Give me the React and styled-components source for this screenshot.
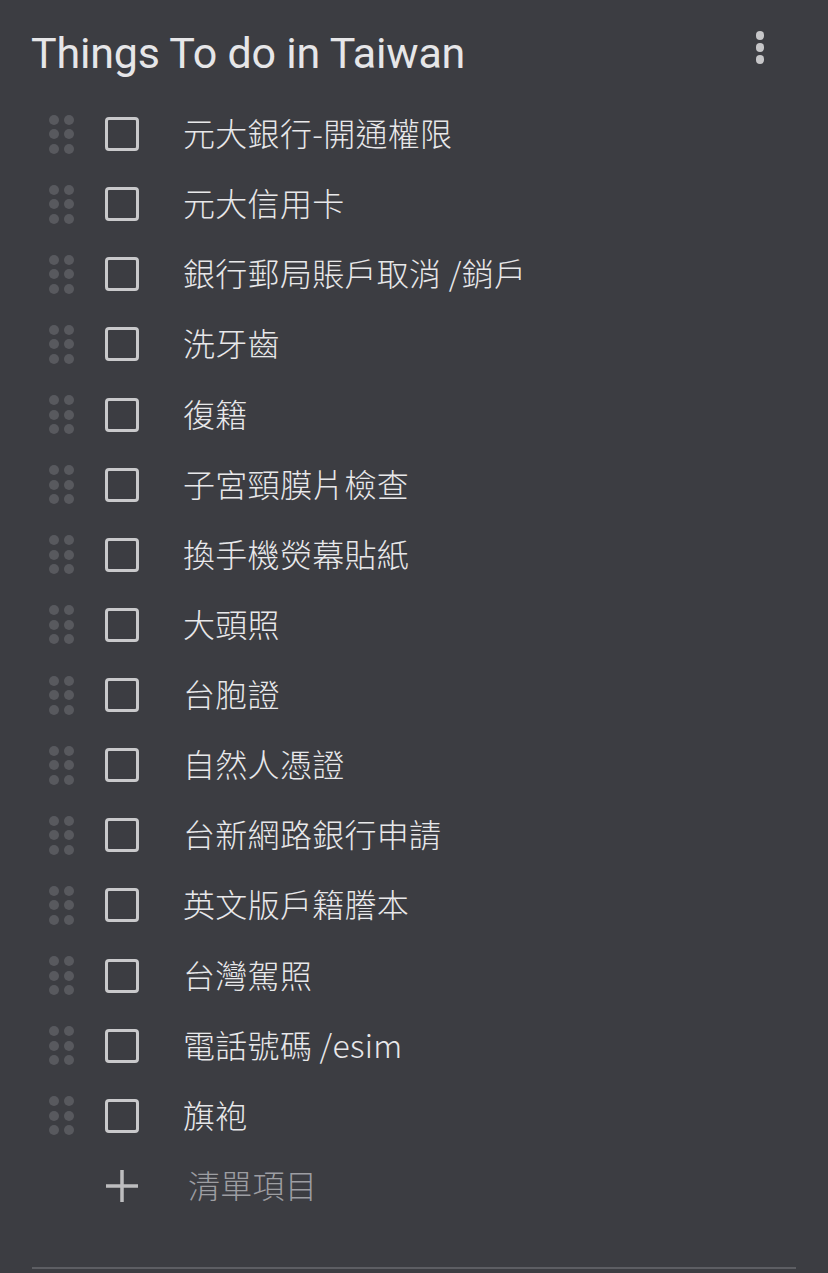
import styled, { createGlobalStyle } from 'styled-components';

const GlobalStyle = createGlobalStyle`
  html, body {
    margin: 0;
    padding: 0;
    background: #3c3d42;
  }
`;

const items = [
  '元大銀行-開通權限',
  '元大信用卡',
  '銀行郵局賬戶取消 /銷戶',
  '洗牙齒',
  '復籍',
  '子宮頸膜片檢查',
  '換手機熒幕貼紙',
  '大頭照',
  '台胞證',
  '自然人憑證',
  '台新網路銀行申請',
  '英文版戶籍謄本',
  '台灣駕照',
  '電話號碼 /esim',
  '旗袍',
];

const Page = styled.div`
  width: 828px;
  min-height: 1273px;
  background: #3c3d42;
  font-family: Roboto, "Noto Sans CJK TC", sans-serif;
  overflow: hidden;
`;

const Header = styled.header`
  height: 99px;
  display: flex;
  align-items: center;
  justify-content: space-between;
  padding: 0 64px 0 31px;
  box-sizing: border-box;
`;

const Title = styled.h1`
  margin: 6px 0 0;
  font-size: 43px;
  font-weight: 400;
  color: #e6e6e8;
  letter-spacing: -0.2px;
`;

const Kebab = styled.button`
  display: flex;
  flex-direction: column;
  gap: 3.5px;
  padding: 0;
  margin-bottom: 4px;
  background: none;
  border: none;
  span {
    width: 8.5px;
    height: 8.5px;
    border-radius: 50%;
    background: #c6c6c8;
  }
`;

const List = styled.ul`
  list-style: none;
  margin: 0;
  padding: 0;
`;

const Row = styled.li`
  height: 70.14px;
  display: flex;
  align-items: center;
  padding-left: 49px;
`;

const Handle = styled.div`
  display: grid;
  grid-template-columns: repeat(2, 10px);
  gap: 4.5px 5px;
  margin-right: 31px;
  span {
    width: 10px;
    height: 10px;
    border-radius: 50%;
    background: #58595e;
  }
`;

const Checkbox = styled.div`
  width: 34px;
  height: 34px;
  box-sizing: border-box;
  border: 3px solid #c9c9cb;
  border-radius: 4px;
  margin-right: 44px;
  flex-shrink: 0;
`;

const Label = styled.span`
  font-size: 32px;
  font-weight: 300;
  letter-spacing: 0.3px;
  color: #e8e8ea;
  font-family: "Noto Sans CJK TC", sans-serif;
  line-height: 1;
  margin-top: -4px;
`;

const AddRow = styled.div`
  height: 70px;
  display: flex;
  align-items: center;
  padding-left: 104px;
`;

const Plus = styled.svg`
  width: 36px;
  height: 36px;
  margin-right: 48px;
`;

const AddLabel = styled(Label)`
  color: #9d9ea2;
`;

const Divider = styled.hr`
  margin: 46px 32px 0;
  border: none;
  height: 2px;
  background: #5d5e63;
`;

export default function App() {
  return (
    <Page>
      <GlobalStyle />
      <Header>
        <Title>Things To do in Taiwan</Title>
        <Kebab aria-label="more">
          <span />
          <span />
          <span />
        </Kebab>
      </Header>
      <List>
        {items.map((text) => (
          <Row key={text}>
            <Handle>
              {Array.from({ length: 6 }).map((_, i) => (
                <span key={i} />
              ))}
            </Handle>
            <Checkbox />
            <Label>{text}</Label>
          </Row>
        ))}
      </List>
      <AddRow>
        <Plus viewBox="0 0 36 36">
          <path d="M18 2v32M2 18h32" stroke="#bdbdbf" strokeWidth="3.5" />
        </Plus>
        <AddLabel>清單項目</AddLabel>
      </AddRow>
      <Divider />
    </Page>
  );
}
